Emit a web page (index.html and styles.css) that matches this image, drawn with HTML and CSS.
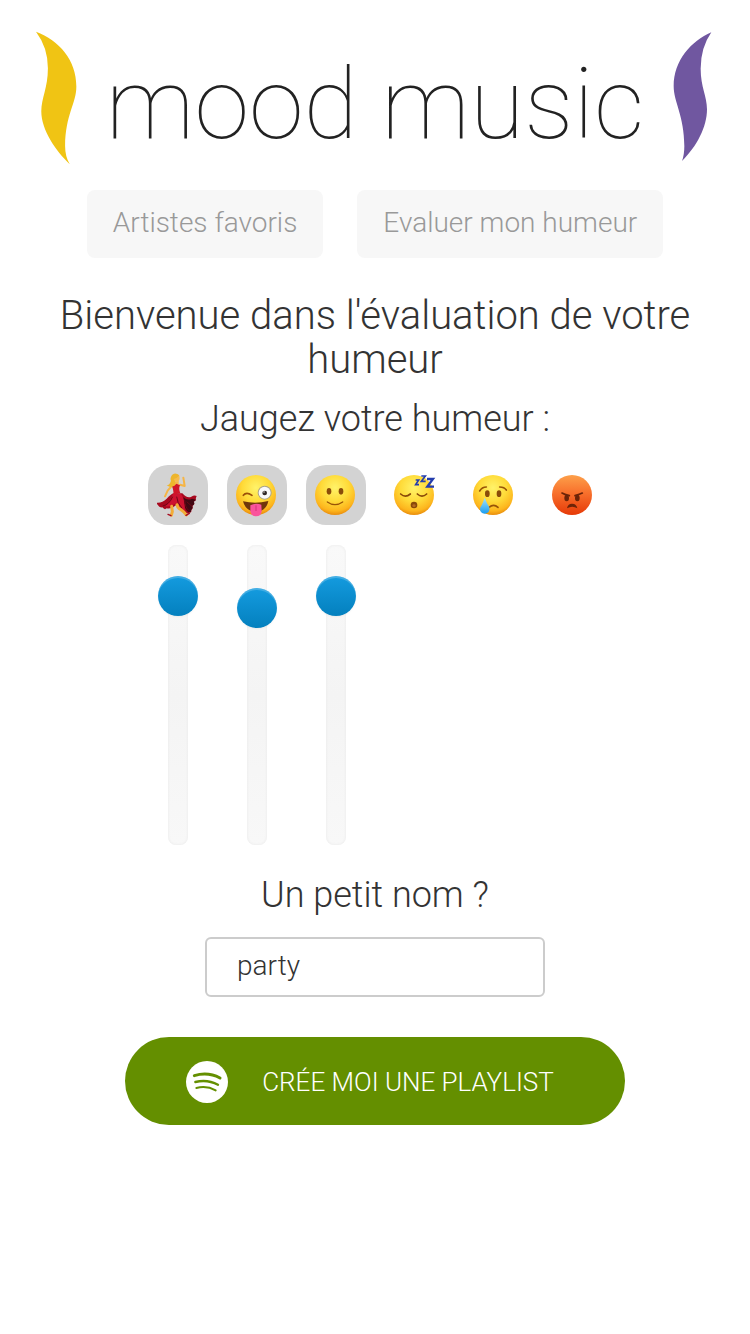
FILE: index.html
```html
<!DOCTYPE html>
<html lang="fr">
<head>
<meta charset="utf-8">
<meta name="viewport" content="width=device-width, initial-scale=1">
<title>mood music</title>
<link rel="stylesheet" href="styles.css">
</head>
<body>
<svg class="defs" aria-hidden="true">
  <defs>
    <radialGradient id="face" cx="50%" cy="32%" r="68%">
      <stop offset="0" stop-color="#fff36a"/><stop offset=".5" stop-color="#ffdb39"/><stop offset=".85" stop-color="#fdb51d"/><stop offset="1" stop-color="#e98d0c"/>
    </radialGradient>
    <linearGradient id="rage" x1="0" y1="0" x2="0" y2="1">
      <stop offset="0" stop-color="#fda04a"/><stop offset=".45" stop-color="#f8702c"/><stop offset="1" stop-color="#e63a08"/>
    </linearGradient>
    <linearGradient id="tear" x1="0" y1="0" x2="0" y2="1">
      <stop offset="0" stop-color="#a4e4fb"/><stop offset="1" stop-color="#1a9df0"/>
    </linearGradient>
  </defs>
</svg>
<header class="header">
  <h1 class="logo">
    <svg class="flame-left" viewBox="48 34 124 402" aria-hidden="true"><path fill="#f0c414" d="M48 35C118 62 170 120 170 200C170 252 137 284 136 380Q136 412 150 435C108 395 64 332 64 275C64 235 84 205 84 145Q84 83 48 35Z"/></svg>
    <span class="logo-text">mood music</span>
    <svg class="flame-right" viewBox="340 38 117 390" aria-hidden="true"><path fill="#7057a0" d="M455 39C395 65 342 124 342 200C342 248 374 290 374 380Q374 407 367 425C411 382 442 323 442 270C442 230 423 204 423 148Q423 85 455 39Z"/></svg>
  </h1>
  <nav class="nav">
    <a class="nav-link" href="#artistes">Artistes favoris</a>
    <a class="nav-link" href="#humeur">Evaluer mon humeur</a>
  </nav>
</header>
<main class="main">
  <h2 class="title">Bienvenue dans l'évaluation de votre humeur</h2>
  <h3 class="subtitle">Jaugez votre humeur :</h3>
  <div class="moods">
    <div class="mood">
      <button class="mood-button" type="button" aria-pressed="true" aria-label="Dansante">
        <svg class="emoji" viewBox="0 0 120 130" aria-hidden="true">
          <path fill="#a8091f" d="M50 60L76 60Q91 77 103 70Q112 64 119 68Q115 76 117 81L110 85Q114 91 110 95L106 98Q109 106 103 110Q105 119 97 118Q92 123 84 117Q68 113 58 95Q44 108 29 105Q23 111 16 102Q7 104 3 96Q-1 92 0 88Q16 89 29 76Q42 62 50 60Z"/>
          <path fill="#410812" d="M79 72Q91 83 105 76L117 79L110 85Q114 91 109 95L105 98Q109 106 102 110Q104 118 95 117Q80 108 79 72Z"/>
          <path fill="#ce1230" d="M48 61L72 62Q85 80 83 114Q68 108 59 89Q43 101 25 99Q38 88 48 61Z"/>
          <path fill="none" stroke="#6f0715" stroke-width="3" d="M47 70Q37 94 17 98M59 70Q60 88 75 105M83 79Q84 103 96 112M89 85L107 101"/>
          <path fill="none" stroke="#f2ad38" stroke-width="9" stroke-linejoin="round" stroke-linecap="round" d="M60 94Q61 104 72 109Q82 115 88 125M44 99L46 115L43 126"/>
          <path fill="none" stroke="#a40a1f" stroke-width="4" stroke-linecap="round" d="M42 127L33 123M87 126L97 120"/>
          <path fill="none" stroke="#f6b545" stroke-width="6" stroke-linecap="round" stroke-linejoin="round" d="M45 37L32 52L24 69M69 34L83 38L79 13"/>
          <path fill="#f5b44b" d="M47 25L65 23L65 42L49 43Z"/>
          <path fill="#d01428" d="M43 34Q49 43 58 31L69 36Q64 47 70 59L49 64Q51 51 43 34Z"/>
          <circle cx="57" cy="14" r="11" fill="#f7bb4c"/>
          <path fill="#edb52c" d="M67 6Q54-5 45 5Q38 16 42 22Q39 34 29 36Q44 46 53 35Q58 28 50 17Q62 14 67 6Z"/>
        </svg>
      </button>
      <input class="slider" type="range" min="0" max="260" value="229" aria-label="Niveau dansante">
    </div>
    <div class="mood">
      <button class="mood-button" type="button" aria-pressed="true" aria-label="Farceuse">
        <svg class="emoji" viewBox="0 0 120 120" aria-hidden="true">
          <circle cx="60" cy="60" r="60" fill="url(#face)"/>
          <path fill="none" stroke="#9c4f08" stroke-width="5" stroke-linecap="round" d="M22 61Q31 49 48 61"/>
          <circle cx="86" cy="53" r="21" fill="#aaa38a"/><circle cx="86" cy="53" r="18" fill="#f9f9fb"/><circle cx="86" cy="54" r="7" fill="#302828"/><circle cx="84" cy="51" r="2" fill="#fff"/>
          <path fill="#70360b" d="M21 79Q59 88 97 78Q91 109 60 110Q29 109 21 79Z"/>
          <path fill="#fa549c" d="M43 91Q60 82 76 89L77 109Q76 124 60 124Q45 124 43 109Z"/><path stroke="#d3307a" stroke-width="3" d="M60 91V108"/>
        </svg>
      </button>
      <input class="slider" type="range" min="0" max="260" value="217" aria-label="Niveau farceuse">
    </div>
    <div class="mood">
      <button class="mood-button" type="button" aria-pressed="true" aria-label="Joyeuse">
        <svg class="emoji" viewBox="0 0 120 120" aria-hidden="true">
          <circle cx="60" cy="60" r="60" fill="url(#face)"/>
          <ellipse cx="42" cy="49" rx="7" ry="10" fill="#8a4c09"/><ellipse cx="78" cy="49" rx="7" ry="10" fill="#8a4c09"/>
          <path fill="none" stroke="#985407" stroke-width="4" stroke-linecap="round" d="M37 81Q60 97 83 81"/>
        </svg>
      </button>
      <input class="slider" type="range" min="0" max="260" value="229" aria-label="Niveau joyeuse">
    </div>
    <div class="mood">
      <button class="mood-button" type="button" aria-pressed="false" aria-label="Endormie">
        <svg class="emoji" viewBox="0 0 120 120" aria-hidden="true">
          <circle cx="60" cy="60" r="60" fill="url(#face)"/>
          <path fill="none" stroke="#8a4909" stroke-width="5" stroke-linecap="round" d="M20 57Q34 70 49 57M70 57Q84 70 98 57"/>
          <circle cx="60" cy="90" r="10" fill="#8a4909"/><ellipse cx="60" cy="92" rx="5" ry="4" fill="#b76a22"/>
          <path fill="none" stroke="#243dad" stroke-width="5" d="M65 15H74L65 29H75M82 3H94L82 19H95"/>
          <path fill="none" stroke="#243dad" stroke-width="7" d="M99 12H117L100 35H120"/>
        </svg>
      </button>
    </div>
    <div class="mood">
      <button class="mood-button" type="button" aria-pressed="false" aria-label="Triste">
        <svg class="emoji" viewBox="0 0 120 120" aria-hidden="true">
          <circle cx="60" cy="60" r="60" fill="url(#face)"/>
          <ellipse cx="43" cy="56" rx="7" ry="10" fill="#8a4c09"/><ellipse cx="78" cy="56" rx="7" ry="10" fill="#8a4c09"/>
          <path fill="none" stroke="#985407" stroke-width="5" stroke-linecap="round" d="M20 48Q27 36 40 36M80 36Q94 36 100 45M48 97Q62 85 75 97"/>
          <path fill="url(#tear)" d="M35 68Q28 88 22 97Q18 114 35 116Q52 114 49 97Q42 86 35 68Z"/>
        </svg>
      </button>
    </div>
    <div class="mood">
      <button class="mood-button" type="button" aria-pressed="false" aria-label="En colère">
        <svg class="emoji" viewBox="0 0 120 120" aria-hidden="true">
          <circle cx="60" cy="60" r="60" fill="url(#rage)"/>
          <ellipse cx="44" cy="69" rx="7" ry="10" fill="#6d2408"/><ellipse cx="76" cy="69" rx="7" ry="10" fill="#6d2408"/>
          <path fill="none" stroke="#6d2408" stroke-width="5" stroke-linecap="round" d="M30 54Q37 58 52 62M91 54Q83 58 69 62"/>
          <path fill="#6d2408" d="M45 100Q47 86 60 86Q74 86 76 100Q61 90 45 100Z"/>
        </svg>
      </button>
    </div>
  </div>
  <form class="form">
    <label class="subtitle" for="nom">Un petit nom ?</label>
    <input class="name-input" id="nom" type="text" value="party">
    <button class="submit" type="button">
      <svg class="spotify" viewBox="0 0 126 126" aria-hidden="true">
        <circle cx="63" cy="63" r="63" fill="#fff"/>
        <path fill="none" stroke="#648f00" stroke-linecap="round" stroke-width="9" d="M25 44Q66 32 102 51"/>
        <path fill="none" stroke="#648f00" stroke-linecap="round" stroke-width="7" d="M28 63Q64 54 96 71"/>
        <path fill="none" stroke="#648f00" stroke-linecap="round" stroke-width="6" d="M31 81Q62 73 89 88"/>
      </svg>
      <span>CRÉE MOI UNE PLAYLIST</span>
    </button>
  </form>
</main>
</body>
</html>
```
FILE: styles.css
```css
* { box-sizing: border-box; }
body {
  margin: 0;
  background: #fff;
  color: #333;
  font-family: Roboto, "Liberation Sans", sans-serif;
  font-weight: 300;
}
.defs { position: absolute; width: 0; height: 0; }
h1, h2, h3 { margin: 0; font-weight: 300; }
.header { padding: 31px 36px 0; }
.logo { display: flex; justify-content: space-between; align-items: flex-start; padding-right: 2px; }
.flame-left { width: 41px; height: 134px; }
.flame-right { width: 39px; height: 132px; }
.logo-text {
  font-size: 99px;
  line-height: 146px;
  margin-bottom: -6px;
  font-weight: 100;
  color: #222;
  white-space: nowrap;
}
.nav { display: flex; justify-content: center; gap: 34px; margin-top: 19px; }
.nav-link {
  padding: 0 26px 2px;
  border-radius: 8px;
  background: #f7f7f7;
  color: #999;
  font-size: 28px;
  line-height: 66px;
  text-decoration: none;
  white-space: nowrap;
}
.main { padding: 36px 40px; text-align: center; }
.title { font-size: 40px; line-height: 44px; }
.subtitle { display: block; font-size: 36px; line-height: 44px; }
h3.subtitle { margin-top: 15px; }
.moods {
  display: flex;
  justify-content: center;
  gap: 19px;
  margin-top: 24px;
}
.mood { width: 60px; display: flex; flex-direction: column; align-items: center; gap: 20px; }
.mood-button {
  width: 60px;
  height: 60px;
  padding: 0 2px 0 0;
  border: 0;
  border-radius: 20px;
  background: transparent;
  display: flex;
  align-items: center;
  justify-content: center;
}
.mood-button[aria-pressed="true"] { background: #d3d3d3; }
.emoji { width: 40px; height: 44px; overflow: visible; }
.slider {
  appearance: none;
  writing-mode: vertical-lr;
  direction: rtl;
  width: 40px;
  height: 300px;
  margin: 0;
  background: transparent;
}
.slider::-webkit-slider-runnable-track {
  width: 20px;
  height: 300px;
  border-radius: 8px;
  background: linear-gradient(#f9f9f9, #f4f4f4 50%, #f8f8f8);
  box-shadow: inset 0 0 3px #e8e8e8;
}
.slider::-webkit-slider-thumb {
  appearance: none;
  width: 40px;
  height: 40px;
  margin-left: -10px;
  border-radius: 50%;
  background: linear-gradient(#149bdf, #0480be);
  box-shadow: inset 0 2px 0 rgba(255, 255, 255, .2), 0 1px 2px rgba(0, 0, 0, .05);
}
.form { display: flex; flex-direction: column; align-items: center; margin-top: 28px; }
.name-input {
  width: 340px;
  max-width: 100%;
  height: 60px;
  margin-top: 20px;
  padding: 0 30px 4px;
  border: 2px solid #ccc;
  border-radius: 6px;
  background: #fff;
  color: #333;
  font: inherit;
  font-size: 28px;
}
.submit {
  width: 500px;
  max-width: 100%;
  height: 88px;
  margin-top: 40px;
  padding: 2px 10px 0 0;
  border: 0;
  border-radius: 44px;
  background: #648f00;
  color: #fff;
  font: inherit;
  font-size: 26px;
  display: flex;
  align-items: center;
  justify-content: center;
  gap: 34px;
}
.spotify { width: 42px; height: 42px; }
```
